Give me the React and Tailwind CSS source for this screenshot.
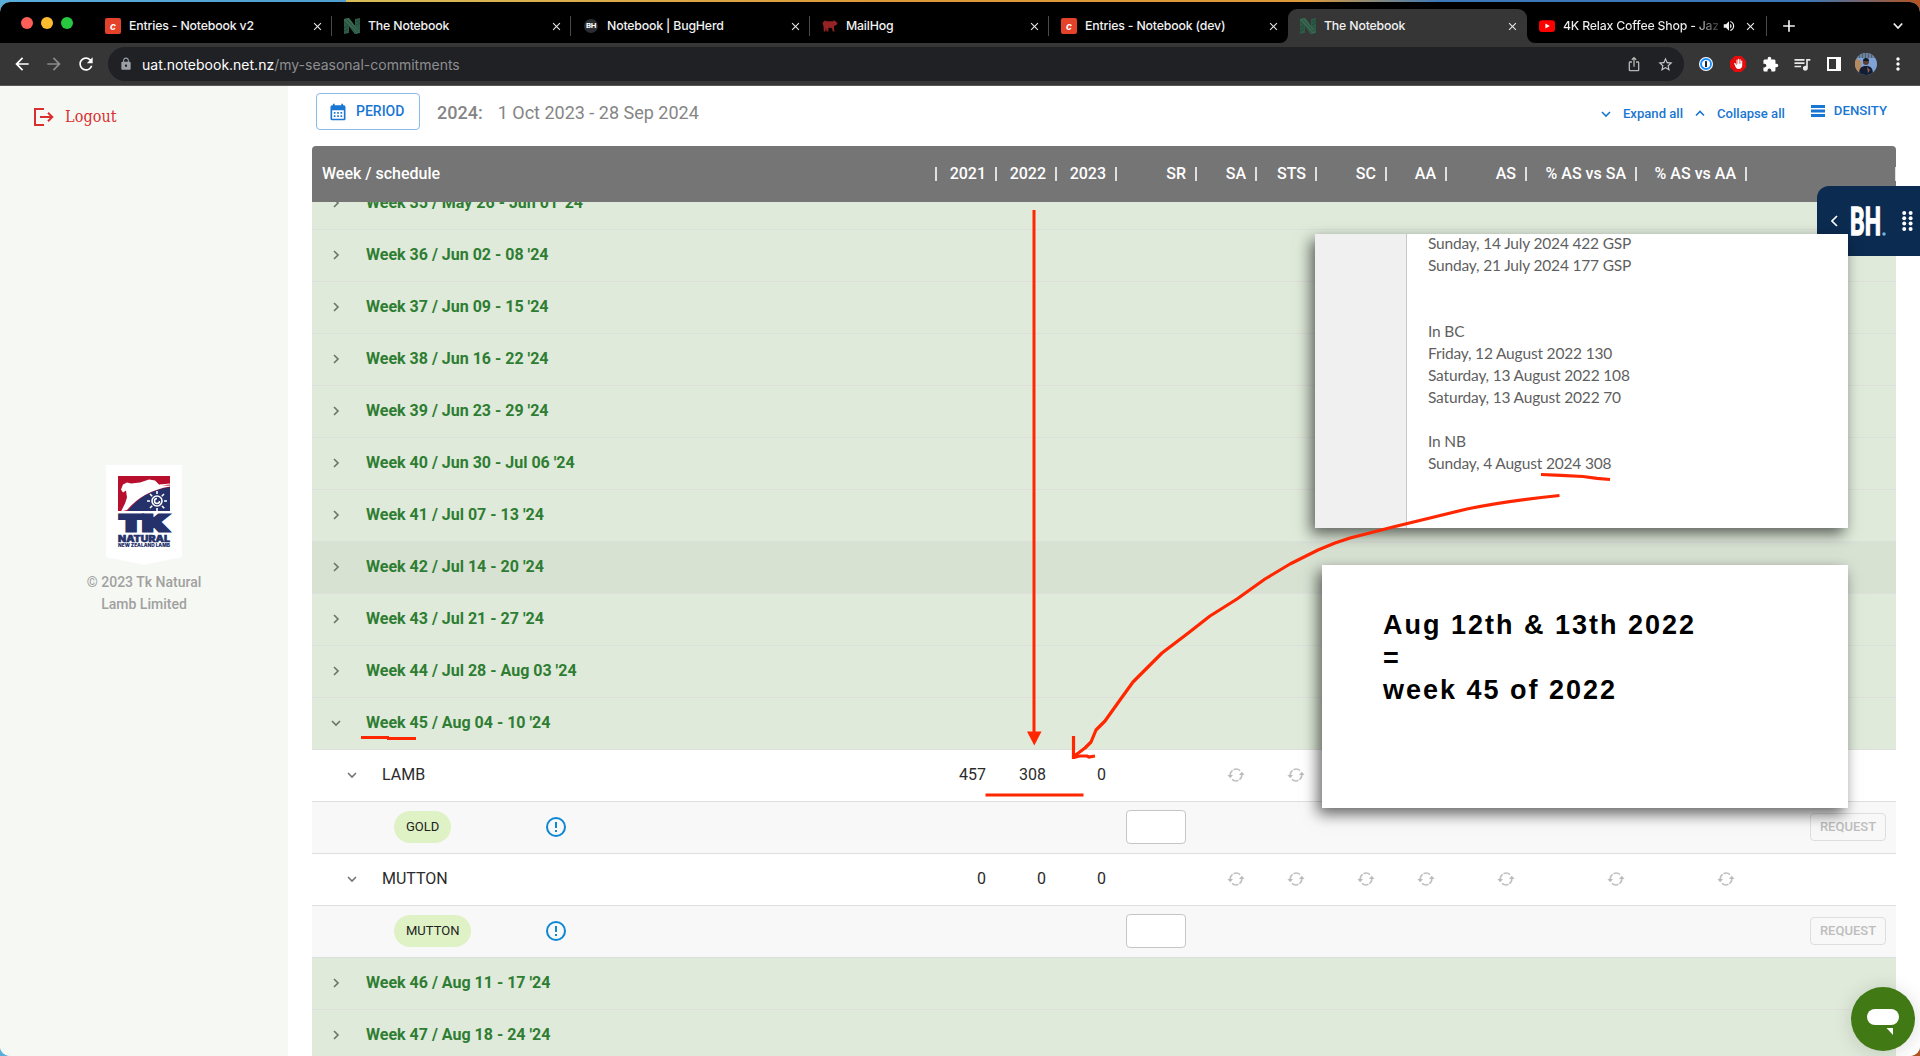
import React from "react";
import {
  MdLock, MdExtension, MdQueueMusic, MdArrowBack, MdArrowForward, MdRefresh, MdIosShare,
  MdStarBorder, MdMoreVert, MdCalendarMonth, MdVolumeUp, MdClose, MdAdd, MdBackHand,
} from "react-icons/md";

function CraftIcon() {
  return (
    <div className="flex h-4 w-4 shrink-0 items-center justify-center rounded-[2px] bg-[#e5422b] font-['Inter'] text-[10px] font-bold italic leading-none text-white">c</div>
  );
}

function NotebookIcon() {
  return (
    <svg className="h-4 w-4 shrink-0" viewBox="0 0 16 16">
      <path d="M0 1 5 0l6 8V1l5-1v15l-5 1-6-8v7l-5 1z" fill="#2d5a46" />
      <path d="M0 1 5 0l11 14.500L11 16 0 2z" fill="#386850" />
      <path d="M1 4l11 11M3 2l11 12M12 4l4-2M12 7l4-2M0 10l4-2M0 13l4-2" stroke="#1c3d2f" strokeWidth=".6" />
    </svg>
  );
}

function BugHerdIcon() {
  return (
    <div className="flex h-[14px] w-4 shrink-0 items-center justify-center">
      <div className="flex h-[14px] w-[14px] items-center justify-center rounded-full bg-[#2b2d33] font-['Roboto'] text-[8px] font-bold leading-none tracking-[-0.5px] text-white">BH</div>
    </div>
  );
}

function HogIcon() {
  return (
    <svg className="h-4 w-4 shrink-0" viewBox="0 0 16 16">
      <path d="M.5 4.500 2 3.500 3 2.300l1.500 1H11l1-1 1 .8 1.500 1L15.500 6l-2 1.500-1.500.5v2l.5 3.500h-1.800L10 10l-3.500-.3L6.300 13.500H4.600L4 10.200 3.300 13.500H1.800L1.600 9 1 6.500z" fill="#952225" />
    </svg>
  );
}

function YouTubeIcon() {
  return (
    <svg className="h-4 w-4 shrink-0" viewBox="0 0 16 16">
      <rect y="2.300" width="16" height="11.600" rx="3" fill="#f00" />
      <path d="M6.400 5.600v5L10.800 8.100z" fill="#fff" />
    </svg>
  );
}

const tabs = [
  { title: "Entries - Notebook v2", icon: <CraftIcon />, sep: true },
  { title: "The Notebook", icon: <NotebookIcon />, sep: true },
  { title: "Notebook | BugHerd", icon: <BugHerdIcon />, sep: true },
  { title: "MailHog", icon: <HogIcon />, sep: true },
  { title: "Entries - Notebook (dev)", icon: <CraftIcon /> },
  { title: "The Notebook", icon: <NotebookIcon />, active: true },
];

function Tab({ title, icon, sep, active }) {
  return (
    <div className={"relative flex h-[34px] w-[239px] shrink-0 items-center pl-3 pr-2 " + (active ? "rounded-t-[9px] bg-[#363636]" : "")}>
      {icon}
      <span className="ml-2 flex-1 whitespace-nowrap tracking-[-0.17px]">{title}</span>
      <MdClose className="h-[13px] w-[13px] text-[#e8e8e8]" />
      {sep && <div className="absolute right-0 top-[7px] h-5 w-px bg-[#4a4a4a]" />}
      {active && (
        <>
          <svg className="absolute -left-2 bottom-0 h-2 w-2" viewBox="0 0 8 8"><path d="M8 0v8H0a8 8 0 0 0 8-8z" fill="#363636" /></svg>
          <svg className="absolute -right-2 bottom-0 h-2 w-2" viewBox="0 0 8 8"><path d="M0 0v8h8A8 8 0 0 1 0 0z" fill="#363636" /></svg>
        </>
      )}
    </div>
  );
}

function TabStrip() {
  return (
    <div className="flex h-[41px] items-end bg-black font-['Inter'] text-[12.3px] font-medium text-[#f1f1f1]">
      <div className="flex h-[41px] w-[93px] shrink-0 items-center gap-2 pl-[21px]">
        <div className="h-3 w-3 rounded-full bg-[#fe5f57]" />
        <div className="h-3 w-3 rounded-full bg-[#febc2e]" />
        <div className="h-3 w-3 rounded-full bg-[#28c840]" />
      </div>
      {tabs.map((t, i) => <Tab key={i} {...t} />)}
      <div className="flex h-[34px] flex-1 items-center pl-3">
        <YouTubeIcon />
        <span className="ml-2 w-[155px] overflow-hidden whitespace-nowrap bg-gradient-to-r from-[#f1f1f1] from-85% to-[#333] bg-clip-text tracking-[-0.2px] text-transparent">4K Relax Coffee Shop - Jaz</span>
        <MdVolumeUp className="ml-[4px] h-[14px] w-[14px]" />
        <MdClose className="ml-2 h-[13px] w-[13px]" />
        <div className="ml-[9px] h-5 w-px bg-[#4a4a4a]" />
        <MdAdd className="ml-3 h-5 w-5" />
        <svg className="ml-auto mr-[17px] h-[10px] w-[10px]" viewBox="0 0 10 10" fill="none" stroke="#eee" strokeWidth="1.800"><path d="M.8 2.500 5 7l4.200-4.500" /></svg>
      </div>
    </div>
  );
}

function Toolbar() {
  return (
    <div className="flex h-[43px] items-center border-b border-[#5a5856] bg-[#363636]">
      <div className="flex w-[108px] shrink-0 items-center gap-[12px] pl-3 text-white">
        <MdArrowBack className="h-5 w-5" />
        <MdArrowForward className="h-5 w-5 text-[#8b8b8b]" />
        <MdRefresh className="h-5 w-5" />
      </div>
      <div className="flex h-[34px] w-[576px] flex-1 items-center rounded-full bg-[#202124] pl-[11px] pr-[10px] font-['Inter'] text-[14px]">
        <MdLock className="h-[14px] w-[14px] text-[#9aa0a6]" />
        <span className="ml-[9px] flex-1 whitespace-nowrap text-[#8e8e92]"><span className="text-white">uat.notebook.net.nz</span>/my-seasonal-commitments</span>
        <MdIosShare className="h-4 w-4 text-[#b5b5b5]" />
        <MdStarBorder className="ml-[15px] h-[17px] w-[17px] text-[#c8c8c8]" />
      </div>
      <div className="flex w-[236px] shrink-0 items-center pl-[15px]">
        <svg className="h-[14px] w-[14px]" viewBox="0 0 14 14"><circle cx="7" cy="7" r="7" fill="#fff" /><circle cx="7" cy="7" r="5" fill="#fff" stroke="#1a8cff" strokeWidth="1.900" /><rect x="6" y="4" width="2" height="6" rx=".6" fill="#1c2733" /></svg>
        <div className="ml-[17px] flex h-4 w-4 items-center justify-center">
          <svg className="h-4 w-4" viewBox="0 0 16 16"><path d="M4.700 0h6.600L16 4.700v6.600L11.300 16H4.700L0 11.300V4.700z" fill="#e40d0d" /><g transform="translate(3 2.500) scale(.44)"><MdBackHand size={24} color="#fff" /></g></svg>
        </div>
        <MdExtension className="ml-4 h-[17px] w-[17px] text-white" />
        <MdQueueMusic className="ml-[13px] h-5 w-5 text-[#e8e8e8]" />
        <svg className="ml-[15px] h-[14px] w-[14px]" viewBox="0 0 14 14"><path d="M0 0h14v14H0zM2 2v10h7V2z" fill="#fff" fillRule="evenodd" /></svg>
        <svg className="ml-[14px] h-[22px] w-[22px]" viewBox="0 0 22 22">
          <defs><clipPath id="av"><circle cx="11" cy="11" r="11" /></clipPath></defs>
          <g clipPath="url(#av)">
            <rect width="22" height="22" fill="#7fa3d6" />
            <rect width="22" height="5" fill="#4d6078" />
            <path d="M3 0v5M6 0v5M9 0v5M12 0v5M15 0v5M18 0v5" stroke="#a5b6cd" strokeWidth=".8" />
            <path d="M0 5l6 3v11H0z" fill="#b58a5f" />
            <circle cx="11" cy="9" r="3" fill="#5d3d33" />
            <path d="M8 8a3 3 0 0 1 6 0z" fill="#111827" />
            <path d="M4 22c0-7 2-9 7-9s7 2 7 9z" fill="#141d33" />
            <path d="M12 14l3 3-2 3z" fill="#8a6152" />
          </g>
        </svg>
        <MdMoreVert className="ml-[11px] h-5 w-5 text-white" />
      </div>
    </div>
  );
}

function Logo() {
  return (
    <svg className="h-[100px] w-[76px]" viewBox="0 0 76 100">
      <path d="M0 0h76v92L38 100 0 92z" fill="#fff" />
      <rect x="12" y="11" width="52" height="35" fill="#b90f2e" />
      <path d="M22 46Q37 26 64 22v24z" fill="#25316b" />
      <path d="M21 45Q37 26 64 21.500l-11-2-4-4-6-1-9 3-9 1-4-1-4 2-2 5 2 3 3-2 1 7-2 6-4 8z" fill="#fff" />
      <path d="M22 46Q37 26 64 22.500V46z" fill="#25316b" />
      <path d="M54 20l10-1M55 21.500l9-.5" stroke="#fff" strokeWidth="1.200" />
      <circle cx="51" cy="36" r="5" fill="none" stroke="#fff" strokeWidth="1.600" />
      <path d="M51 33.500a2.500 2.500 0 1 0 2.500 2.500" fill="none" stroke="#fff" strokeWidth="1.500" />
      <path d="M51 26v3M51 43v3M41 36h3M58 36h3M44 29l2.200 2.200M56 41l2.200 2.200M58 29l-2.200 2.200M44 43l2.200-2.200" stroke="#fff" strokeWidth="1.600" />
      <text x="13.500" y="66" textLength="49" lengthAdjust="spacingAndGlyphs" fontFamily="Inter" fontWeight="900" fontSize="21.500" fill="#25316b" stroke="#25316b" strokeWidth="3">TK</text>
      <text x="12" y="76.500" textLength="52" lengthAdjust="spacingAndGlyphs" fontFamily="Inter" fontWeight="900" fontSize="8.500" fill="#25316b" stroke="#25316b" strokeWidth=".5">NATURAL</text>
      <text x="12" y="81.500" textLength="52" lengthAdjust="spacingAndGlyphs" fontFamily="Inter" fontWeight="900" fontSize="4.600" fill="#25316b">NEW ZEALAND LAMB</text>
    </svg>
  );
}

function Sidebar() {
  return (
    <aside className="flex w-[288px] shrink-0 flex-col bg-[#f6f8f4]">
      <div className="ml-[34px] mt-[19px] flex h-6 items-center text-[#d9302f]">
        <svg className="h-[20px] w-[20px]" viewBox="0 0 20 20" fill="none" stroke="currentColor" strokeWidth="2"><path d="M10 2H1v16h9M6 10h12M14 5.800 18.300 10 14 14.200" /></svg>
        <span className="ml-[11px] whitespace-nowrap font-['DejaVu_Serif_Condensed','DejaVu_Serif',serif] text-[16px] tracking-[0.1px]">Logout</span>
      </div>
      <div className="mt-[336px] flex flex-col items-center text-center">
        <Logo />
        <p className="mt-[6px] text-[14px] font-medium leading-[22px] text-[#a0a19f]">© 2023 Tk Natural<br />Lamb Limited</p>
      </div>
    </aside>
  );
}

function Chevron({ down, up, className = "" }) {
  const d = up ? "M1 6.500 5 2.500l4 4" : down ? "M1 3l4 4 4-4" : "M3 1l4 4-4 4";
  return (
    <svg className={"h-[10px] w-[10px] shrink-0 " + className} viewBox="0 0 10 10" fill="none" stroke="currentColor" strokeWidth="1.600"><path d={d} /></svg>
  );
}

function TopBar() {
  return (
    <div className="flex h-[60px] shrink-0 items-start pl-7 pr-8 text-[#1976d2]">
      <button className="mt-[7px] flex h-[37px] w-[104px] items-center rounded-[4px] border border-[#8cbae8] pl-[11px] text-[14px] font-medium">
        <MdCalendarMonth className="h-5 w-5" />
        <span className="ml-[8px]">PERIOD</span>
      </button>
      <div className="ml-[17px] mt-[14px] flex text-[18px] leading-[26px] text-[#858585]">
        <span className="font-medium">2024:</span>
        <span className="ml-[15px]">1 Oct 2023 - 28 Sep 2024</span>
      </div>
      <div className="ml-auto mt-[17px] flex items-center text-[13.1px] font-medium leading-[22px]">
        <Chevron down />
        <span className="ml-[12px]">Expand all</span>
        <Chevron up className="ml-[12px]" />
        <span className="ml-[12px]">Collapse all</span>
      </div>
      <div className="ml-[26px] mr-px mt-[14px] flex items-center text-[13.2px] font-medium leading-[22px]">
        <svg className="h-3 w-[14px]" viewBox="0 0 14 12"><path d="M0 0h14v3H0zM0 4.500h14v3H0zM0 9h14v3H0z" fill="currentColor" /></svg>
        <span className="ml-[9px]">DENSITY</span>
      </div>
    </div>
  );
}

const columns = [
  ["2021", "w-[60px]"], ["2022", "w-[60px]"], ["2023", "w-[60px]"], ["SR", "w-20"], ["SA", "w-[60px]"],
  ["STS", "w-[60px]"], ["SC", "w-[70px]"], ["AA", "w-[60px]"], ["AS", "w-20"],
  ["% AS vs SA", "w-[110px]"], ["% AS vs AA", "w-[110px]"], ["", "w-[150px]"],
];

function HeadCell({ w, children }) {
  return (
    <div className={"flex shrink-0 items-center justify-end whitespace-nowrap " + w}>
      {children}
      <div className="ml-[9px] h-[14px] w-[2px] bg-[#e0e0e0]" />
    </div>
  );
}

function TableHead() {
  return (
    <div className="relative z-10 flex h-14 shrink-0 overflow-hidden rounded-t-[4px] bg-[#757575] text-[16px] font-medium text-white">
      <div className="flex w-[625px] shrink-0 items-center pl-[10px]">
        <span className="flex-1">Week / schedule</span>
        <div className="h-[14px] w-[2px] bg-[#e0e0e0]" />
      </div>
      {columns.map(([label, w], i) => <HeadCell key={i} w={w}>{label}</HeadCell>)}
    </div>
  );
}

function WeekRow({ label, open, hover }) {
  return (
    <div className={"flex h-[52px] shrink-0 items-center border-b border-[#dcdfdb] pb-[2px] pl-[19px] " + (hover ? "bg-[#d8e2d3]" : "bg-[#dfeada]")}>
      <Chevron down={open} className="mt-px text-[#6d736b]" />
      <span className="ml-[25px] whitespace-nowrap text-[16px] font-bold text-[#2e7d32]">{label}</span>
    </div>
  );
}

function SyncIcon() {
  return (
    <svg className="h-4 w-4 overflow-visible" viewBox="0 0 16 16" fill="none">
      <path d="M2.200 8.500A5.900 5.900 0 0 1 4.600 3.300M5.500 2.700A5.900 5.900 0 0 1 12 3.600M13.800 7.500A5.900 5.900 0 0 1 11.400 12.700M10.500 13.300A5.900 5.900 0 0 1 4 12.400" stroke="#c0c0c0" strokeWidth="1.600" />
      <path d="M-.6 7.900h5.600L2.200 11.200zM11 8.100h5.600L13.800 4.800z" fill="#bbbbbb" />
    </svg>
  );
}

function GroupRow({ label, values }) {
  return (
    <div className="flex h-[52px] shrink-0 items-center border-b border-[#dedede] bg-white pb-[2px] text-[16px] text-[#2b2b2b]">
      <div className="flex w-[625px] shrink-0 items-center pl-[35px]">
        <Chevron down className="text-[#757575]" />
        <span className="ml-[25px]">{label}</span>
      </div>
      {columns.map(([, w], i) => (
        <div key={i} className={"flex shrink-0 justify-end " + w}>
          {i < 3 && <span className="mr-[11px]">{values[i]}</span>}
          {i > 3 && i < 11 && <div className="mr-[13px]"><SyncIcon /></div>}
        </div>
      ))}
    </div>
  );
}

function ItemRow({ label }) {
  return (
    <div className="flex h-[52px] shrink-0 items-center border-b border-[#dedede] bg-[#f8f8f8] pb-px pr-[10px]">
      <div className="flex w-[152px] shrink-0 items-center pl-[82px]">
        <span className="flex h-8 items-center rounded-full bg-[#dff2c5] px-3 text-[13px] text-[#222]">{label}</span>
      </div>
      <div className="flex w-[184px] shrink-0 justify-center">
        <svg className="h-5 w-5" viewBox="0 0 20 20" fill="none" stroke="#0b87d6" strokeWidth="2"><circle cx="10" cy="10" r="9" /><path d="M10 5v6M10 13v2" /></svg>
      </div>
      <div className="ml-[478px] h-[34px] w-[60px] rounded-[4px] border border-[#c6c6c6] bg-white" />
      <button className="ml-auto h-7 w-[76px] rounded-[4px] border border-[#dedede] text-[13px] font-medium text-[#bdbdbd]">REQUEST</button>
    </div>
  );
}

const weeks = [
  "Week 35 / May 26 - Jun 01 '24", "Week 36 / Jun 02 - 08 '24", "Week 37 / Jun 09 - 15 '24",
  "Week 38 / Jun 16 - 22 '24", "Week 39 / Jun 23 - 29 '24", "Week 40 / Jun 30 - Jul 06 '24",
  "Week 41 / Jul 07 - 13 '24", "Week 42 / Jul 14 - 20 '24", "Week 43 / Jul 21 - 27 '24",
  "Week 44 / Jul 28 - Aug 03 '24", "Week 45 / Aug 04 - 10 '24",
];

function BugHerdWidget() {
  return (
    <div className="absolute right-0 top-[186px] z-20 flex h-[70px] w-[103px] items-center rounded-tl-[12px] bg-[#0b2b50]">
      <svg className="ml-[14px] h-3 w-[7px]" viewBox="0 0 7 12" fill="none" stroke="#fff" strokeWidth="1.600"><path d="M6 1 1 6l5 5" /></svg>
      <svg className="ml-[12px] h-[32px] w-[36px] overflow-visible" viewBox="0 0 36 32">
        <text x="0" y="30" textLength="31" lengthAdjust="spacingAndGlyphs" fontFamily="Roboto" fontWeight="700" fontSize="39" fill="#fff" stroke="#fff" strokeWidth="1.300">BH</text>
        <circle cx="34" cy="29" r="1.700" fill="#6fb7e0" />
      </svg>
      <svg className="ml-[16px] h-5 w-[11px]" viewBox="0 0 11 20" fill="#fff">
        {[2, 7.300, 12.600, 17.900].map((y) => <React.Fragment key={y}><circle cx="2.200" cy={y} r="2" /><circle cx="8.600" cy={y} r="2" /></React.Fragment>)}
      </svg>
    </div>
  );
}

function NoteCard() {
  const lines = ["Sunday, 14 July 2024 422 GSP", "Sunday, 21 July 2024 177 GSP", "", "", "In BC", "Friday, 12 August 2022 130",
    "Saturday, 13 August 2022 108", "Saturday, 13 August 2022 70", "", "In NB", "Sunday, 4 August 2024 308"];
  return (
    <div className="absolute left-[1315px] top-[234px] z-30 flex h-[294px] w-[533px] bg-white shadow-[-4px_6px_14px_rgba(0,0,0,0.6)]">
      <div className="w-[92px] border-r border-[#c8c8c8] bg-[#f0f0f0]" />
      <div className="-mt-[2px] pl-[21px] font-['Lato'] text-[15.500px] leading-[22px] tracking-[-0.18px] text-[#5f5f5f]">
        {lines.map((l, i) => <div key={i} className="h-[22px] whitespace-nowrap">{l}</div>)}
      </div>
    </div>
  );
}

function WeekCard() {
  return (
    <div className="absolute left-[1322px] top-[565px] z-30 h-[243px] w-[526px] bg-white pl-[61px] pt-[44px] font-['Liberation_Sans'] text-[27px] font-bold leading-[32.500px] tracking-[2px] text-black shadow-[-4px_6px_14px_rgba(0,0,0,0.6)]">
      Aug 12th &amp; 13th 2022<br />=<br />week 45 of 2022
    </div>
  );
}

function Annotations() {
  return (
    <svg className="pointer-events-none absolute left-0 top-0 z-40 h-[1056px] w-[1920px]" viewBox="0 0 1920 1056" fill="none" stroke="#ff2600" strokeWidth="3.200">
      <path d="M1034 210V734" strokeWidth="3" />
      <path d="M1027 731.500h14.500L1034.300 745.500z" fill="#ff2600" stroke="none" />
      <path d="M1559.500 495.500Q1505 501 1467 509L1393 527 1350 538 1335 543 1318 550 1290 564 1265 579 1237 599 1210 616 1187 634 1162 653 1133 682 1120 700 1105 721 1096 730 1091 742 1085 748 1073 757" strokeLinejoin="round" />
      <path d="M1073.500 736v23M1072 757.500l8-1.500h7l2 1 6-1" />
      <path d="M1072 759v-6l6 5z" fill="#ff2600" stroke="none" />
      <path d="M361 737.500h28M387 738.500h29" />
      <path d="M985.500 795h98" />
      <path d="M1541 474.500l20 .8 22 1.200 14 1.800 13 1.200" />
    </svg>
  );
}

function ChatButton() {
  return (
    <div className="absolute left-[1851px] top-[987px] z-30 flex h-16 w-16 items-center justify-center rounded-full bg-[#417a14] shadow-[0_2px_20px_rgba(0,0,0,0.14)]">
      <svg className="h-8 w-8" viewBox="0 0 32 32" fill="#fff"><rect x="0" y="6" width="32" height="16" rx="8" /><path d="M19.500 25H26v7z" /></svg>
    </div>
  );
}

export default function App() {
  return (
    <div className="relative h-[1056px] w-[1920px] overflow-hidden bg-[linear-gradient(to_right,#5aaedb_0%,#4f9fd0_18%,#d8bd58_18%,#dd9a3a_45%,#dd9a3a_68%,#3a78b8_75%,#3a78b8_94%,#b35320_100%)] pt-[2px] font-['Roboto']">
      <div className="flex h-[1054px] flex-col overflow-hidden rounded-[10px] bg-white">
        <TabStrip />
        <Toolbar />
        <div className="flex flex-1 overflow-hidden">
          <Sidebar />
          <main className="flex flex-1 flex-col bg-white">
            <TopBar />
            <div className="ml-6 mr-6 flex w-[1584px] flex-1 flex-col overflow-hidden">
              <TableHead />
              <div className="-mt-6 flex flex-col">
                {weeks.map((w, i) => <WeekRow key={w} label={w} open={i === 10} hover={i === 7} />)}
                <GroupRow label="LAMB" values={["457", "308", "0"]} />
                <ItemRow label="GOLD" />
                <GroupRow label="MUTTON" values={["0", "0", "0"]} />
                <ItemRow label="MUTTON" />
                <WeekRow label="Week 46 / Aug 11 - 17 '24" />
                <WeekRow label="Week 47 / Aug 18 - 24 '24" />
              </div>
            </div>
          </main>
        </div>
      </div>
      <BugHerdWidget />
      <NoteCard />
      <WeekCard />
      <ChatButton />
      <Annotations />
    </div>
  );
}
